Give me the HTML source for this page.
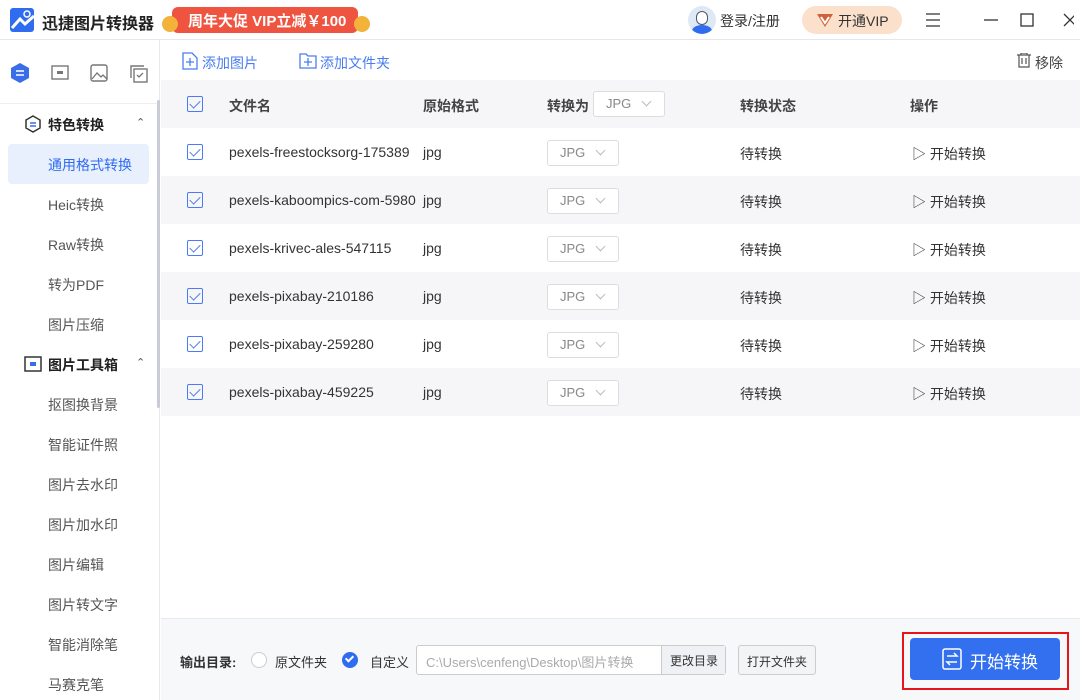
<!DOCTYPE html>
<html><head><meta charset="utf-8"><style>
*{margin:0;padding:0;box-sizing:border-box}
body{width:1080px;height:700px;overflow:hidden;font-family:"Liberation Sans","Noto Sans CJK SC",sans-serif;background:#fff;color:#333;position:relative;font-size:14px}
.abs{position:absolute}
.title{left:0;top:0;width:1080px;height:40px;border-bottom:1px solid #e6e6ee;background:#fff}
.side{left:0;top:40px;width:160px;height:660px;border-right:1px solid #e8e8ee;background:#fff}
.item{position:absolute;left:48px;font-size:14px;color:#555}
.sec{position:absolute;left:24px;font-size:14px;font-weight:bold;color:#222}
.hdr{left:161px;top:80px;width:919px;height:48px;background:#f6f6f8}
.row{left:161px;width:919px;height:48px}
.cb{position:absolute;width:16px;height:16px;border:1.5px solid #4a7cf0;border-radius:2px}
.cb:after{content:"";position:absolute;left:4px;top:1px;width:5px;height:9px;border:solid #4a7cf0;border-width:0 1.5px 1.5px 0;transform:rotate(45deg)}
.sel{position:absolute;width:72px;height:26px;border:1px solid #ddd;border-radius:3px;background:#fff;font-size:13px;color:#888;padding:4px 0 0 12px}
.sel:after{content:"";position:absolute;right:14px;top:6px;width:6px;height:6px;border:solid #bbb;border-width:0 1px 1px 0;transform:rotate(45deg)}
.t{position:absolute;font-size:14px;color:#333}
</style></head><body>
<div class="abs title"></div>
<svg class="abs" style="left:10px;top:8px" width="24" height="24"><rect width="24" height="24" rx="3" fill="#2f6cf0"/><path d="M2 20 L10 11 L15 16 L24 8" stroke="#fff" stroke-width="3" fill="none"/><circle cx="17" cy="6" r="3" fill="none" stroke="#fff" stroke-width="1.5"/></svg>
<div class="abs" style="left:42px;top:10px;font-size:16px;font-weight:bold;color:#222">迅捷图片转换器</div>
<div class="abs" style="left:172px;top:7px;width:186px;height:26px;background:#ee5440;border-radius:6px;color:#fff;font-weight:bold;font-size:15px;padding:3px 0 0 16px">周年大促 VIP立减￥100</div>
<div class="abs" style="left:162px;top:16px;width:16px;height:16px;border-radius:50%;background:#f3b23a"></div>
<div class="abs" style="left:354px;top:16px;width:16px;height:16px;border-radius:50%;background:#f3b23a"></div>
<div class="abs" style="left:688px;top:6px;width:28px;height:28px;border-radius:50%;background:#dfe8f5;overflow:hidden"><div style="position:absolute;left:4px;top:19px;width:20px;height:12px;border-radius:50%;background:#2f6cf0"></div><div style="position:absolute;left:8px;top:5px;width:12px;height:14px;border-radius:6px;background:#fff;border:1px solid #556"></div></div>
<div class="abs" style="left:720px;top:11px;font-size:14px;color:#333">登录/注册</div>
<div class="abs" style="left:802px;top:6px;width:100px;height:28px;border-radius:14px;background:#fbe0cc;font-size:14px;color:#333;padding:5px 0 0 36px">开通VIP</div>
<svg class="abs" style="left:816px;top:12px" width="18" height="16"><path d="M1 2 L17 2 L9 15Z" fill="#d0623a"/><path d="M5 5 L9 11 L13 5" stroke="#fff" stroke-width="2" fill="none"/></svg>
<svg class="abs" style="left:924px;top:12px" width="150" height="16"><path d="M2 2h14M2 8h14M2 14h14" stroke="#333" stroke-width="1.3"/><path d="M60 8h14" stroke="#333" stroke-width="1.3"/><rect x="97" y="2" width="12" height="12" fill="none" stroke="#333" stroke-width="1.3"/><path d="M140 2l12 12M152 2l-12 12" stroke="#333" stroke-width="1.3"/></svg>

<div class="abs side"></div>
<div class="abs" style="left:157px;top:100px;width:3px;height:308px;background:#c9cbd6;border-radius:2px"></div>
<svg class="abs" style="left:10px;top:62px" width="140" height="22"><path d="M10 1 L19 6 L19 16 L10 21 L1 16 L1 6Z" fill="#3a6ee8"/><path d="M6 9h8M6 13h8" stroke="#fff" stroke-width="1.5"/><rect x="42" y="4" width="16" height="13" fill="none" stroke="#777" stroke-width="1.4"/><rect x="47" y="9" width="6" height="3" fill="#777"/><rect x="81" y="3" width="16" height="16" rx="2" fill="none" stroke="#777" stroke-width="1.4"/><path d="M82 17l5-6 4 4 2-2 4 4" stroke="#777" fill="none" stroke-width="1.3"/><rect x="124" y="7" width="13" height="13" fill="none" stroke="#777" stroke-width="1.4"/><path d="M121 16V4h13" stroke="#777" fill="none" stroke-width="1.4"/><path d="M127 13l2 2 4-4" stroke="#777" fill="none" stroke-width="1.3"/></svg>
<div class="abs" style="left:0;top:103px;width:157px;height:1px;background:#eee"></div>
<svg class="abs" style="left:24px;top:115px" width="18" height="18"><path d="M9 1 L16 5 L16 13 L9 17 L2 13 L2 5Z" fill="none" stroke="#333" stroke-width="1.5"/><path d="M6 8h6M6 11h6" stroke="#3a6ee8" stroke-width="1.5"/></svg>
<div class="sec" style="left:48px;top:115px">特色转换</div><div class="abs" style="left:136px;top:116px;font-size:11px;color:#555">⌃</div>
<div class="abs" style="left:8px;top:144px;width:141px;height:40px;background:#e9f0fd;border-radius:4px"></div>
<div class="item" style="top:155px;color:#2f6cf0">通用格式转换</div>
<div class="item" style="top:195px">Heic转换</div>
<div class="item" style="top:235px">Raw转换</div>
<div class="item" style="top:275px">转为PDF</div>
<div class="item" style="top:315px">图片压缩</div>
<svg class="abs" style="left:24px;top:355px" width="18" height="18"><rect x="1" y="2" width="16" height="14" fill="none" stroke="#333" stroke-width="1.5"/><rect x="6" y="7" width="6" height="4" fill="#3a6ee8"/></svg>
<div class="sec" style="left:48px;top:355px">图片工具箱</div><div class="abs" style="left:136px;top:356px;font-size:11px;color:#555">⌃</div>
<div class="item" style="top:395px">抠图换背景</div>
<div class="item" style="top:435px">智能证件照</div>
<div class="item" style="top:475px">图片去水印</div>
<div class="item" style="top:515px">图片加水印</div>
<div class="item" style="top:555px">图片编辑</div>
<div class="item" style="top:595px">图片转文字</div>
<div class="item" style="top:635px">智能消除笔</div>
<div class="item" style="top:675px">马赛克笔</div>

<svg class="abs" style="left:182px;top:52px" width="16" height="18"><path d="M1 1h9l5 5v11H1Z" fill="none" stroke="#4a7cf0" stroke-width="1.3"/><path d="M8 6v8M4 10h8" stroke="#4a7cf0" stroke-width="1.3"/></svg>
<div class="abs" style="left:202px;top:53px;color:#4a7cf0">添加图片</div>
<svg class="abs" style="left:299px;top:53px" width="18" height="16"><path d="M1 1h6l2 2h8v12H1Z" fill="none" stroke="#4a7cf0" stroke-width="1.3"/><path d="M9 5v8M5 9h8" stroke="#4a7cf0" stroke-width="1.3"/></svg>
<div class="abs" style="left:320px;top:53px;color:#4a7cf0">添加文件夹</div>
<svg class="abs" style="left:1017px;top:53px" width="14" height="15"><path d="M0 2h14M4 2V0h6v2M2 2v12h10V2M5 5v6M9 5v6" stroke="#555" fill="none" stroke-width="1.2"/></svg>
<div class="abs" style="left:1035px;top:53px;color:#444">移除</div>

<div class="abs hdr"></div>
<div class="cb" style="left:187px;top:96px"></div>
<div class="t" style="left:229px;top:96px;font-weight:bold;color:#444">文件名</div>
<div class="t" style="left:423px;top:96px;font-weight:bold;color:#444">原始格式</div>
<div class="t" style="left:547px;top:96px;font-weight:bold;color:#444">转换为</div>
<div class="sel" style="left:593px;top:91px">JPG</div>
<div class="t" style="left:740px;top:96px;font-weight:bold;color:#444">转换状态</div>
<div class="t" style="left:910px;top:96px;font-weight:bold;color:#444">操作</div>

<div class="abs row" style="top:176px;background:#f6f6f8"></div>
<div class="abs row" style="top:272px;background:#f6f6f8"></div>
<div class="abs row" style="top:368px;background:#f6f6f8"></div>

<div class="cb" style="left:187px;top:144px"></div><div class="t" style="left:229px;top:144px">pexels-freestocksorg-175389</div><div class="t" style="left:423px;top:144px">jpg</div><div class="sel" style="left:547px;top:140px">JPG</div><div class="t" style="left:740px;top:144px">待转换</div><div class="t" style="left:912px;top:144px">▷ 开始转换</div>
<div class="cb" style="left:187px;top:192px"></div><div class="t" style="left:229px;top:192px">pexels-kaboompics-com-5980</div><div class="t" style="left:423px;top:192px">jpg</div><div class="sel" style="left:547px;top:188px">JPG</div><div class="t" style="left:740px;top:192px">待转换</div><div class="t" style="left:912px;top:192px">▷ 开始转换</div>
<div class="cb" style="left:187px;top:240px"></div><div class="t" style="left:229px;top:240px">pexels-krivec-ales-547115</div><div class="t" style="left:423px;top:240px">jpg</div><div class="sel" style="left:547px;top:236px">JPG</div><div class="t" style="left:740px;top:240px">待转换</div><div class="t" style="left:912px;top:240px">▷ 开始转换</div>
<div class="cb" style="left:187px;top:288px"></div><div class="t" style="left:229px;top:288px">pexels-pixabay-210186</div><div class="t" style="left:423px;top:288px">jpg</div><div class="sel" style="left:547px;top:284px">JPG</div><div class="t" style="left:740px;top:288px">待转换</div><div class="t" style="left:912px;top:288px">▷ 开始转换</div>
<div class="cb" style="left:187px;top:336px"></div><div class="t" style="left:229px;top:336px">pexels-pixabay-259280</div><div class="t" style="left:423px;top:336px">jpg</div><div class="sel" style="left:547px;top:332px">JPG</div><div class="t" style="left:740px;top:336px">待转换</div><div class="t" style="left:912px;top:336px">▷ 开始转换</div>
<div class="cb" style="left:187px;top:384px"></div><div class="t" style="left:229px;top:384px">pexels-pixabay-459225</div><div class="t" style="left:423px;top:384px">jpg</div><div class="sel" style="left:547px;top:380px">JPG</div><div class="t" style="left:740px;top:384px">待转换</div><div class="t" style="left:912px;top:384px">▷ 开始转换</div>

<div class="abs" style="left:161px;top:618px;width:919px;height:82px;background:#f7f8fa;border-top:1px solid #e8e8ee"></div>
<div class="abs" style="left:180px;top:652px;font-size:13px;font-weight:bold;color:#333">输出目录:</div>
<div class="abs" style="left:251px;top:652px;width:16px;height:16px;border-radius:50%;border:1px solid #ccc;background:#fff"></div>
<div class="abs" style="left:275px;top:652px;font-size:13px;color:#333">原文件夹</div>
<div class="abs" style="left:342px;top:652px;width:16px;height:16px;border-radius:50%;background:#2f6cf0"><div style="position:absolute;left:5px;top:2px;width:5px;height:8px;border:solid #fff;border-width:0 2px 2px 0;transform:rotate(45deg)"></div></div>
<div class="abs" style="left:370px;top:652px;font-size:13px;color:#333">自定义</div>
<div class="abs" style="left:416px;top:645px;width:310px;height:30px;border:1px solid #ccc;border-radius:3px;background:#fff"></div>
<div class="abs" style="left:426px;top:652px;font-size:13px;color:#aaa">C:\Users\cenfeng\Desktop\图片转换</div>
<div class="abs" style="left:661px;top:646px;width:64px;height:28px;background:#f0f1f4;border-left:1px solid #ccc;font-size:12px;color:#333;padding:6px 0 0 8px">更改目录</div>
<div class="abs" style="left:738px;top:645px;width:78px;height:30px;border:1px solid #ccc;border-radius:3px;background:#f3f4f6;font-size:12px;color:#333;padding:7px 0 0 8px">打开文件夹</div>
<div class="abs" style="left:902px;top:632px;width:167px;height:58px;border:2px solid #e8141c"></div>
<div class="abs" style="left:910px;top:638px;width:150px;height:42px;background:#3370f0;border-radius:4px;color:#fff;font-size:17px;padding:10px 0 0 60px">开始转换</div>
<svg class="abs" style="left:942px;top:648px" width="20" height="22"><rect x="1" y="1" width="18" height="20" rx="2" fill="none" stroke="#fff" stroke-width="1.5"/><path d="M5 8h10l-3-3M15 14H5l3 3" stroke="#fff" fill="none" stroke-width="1.5"/></svg>
</body></html>
